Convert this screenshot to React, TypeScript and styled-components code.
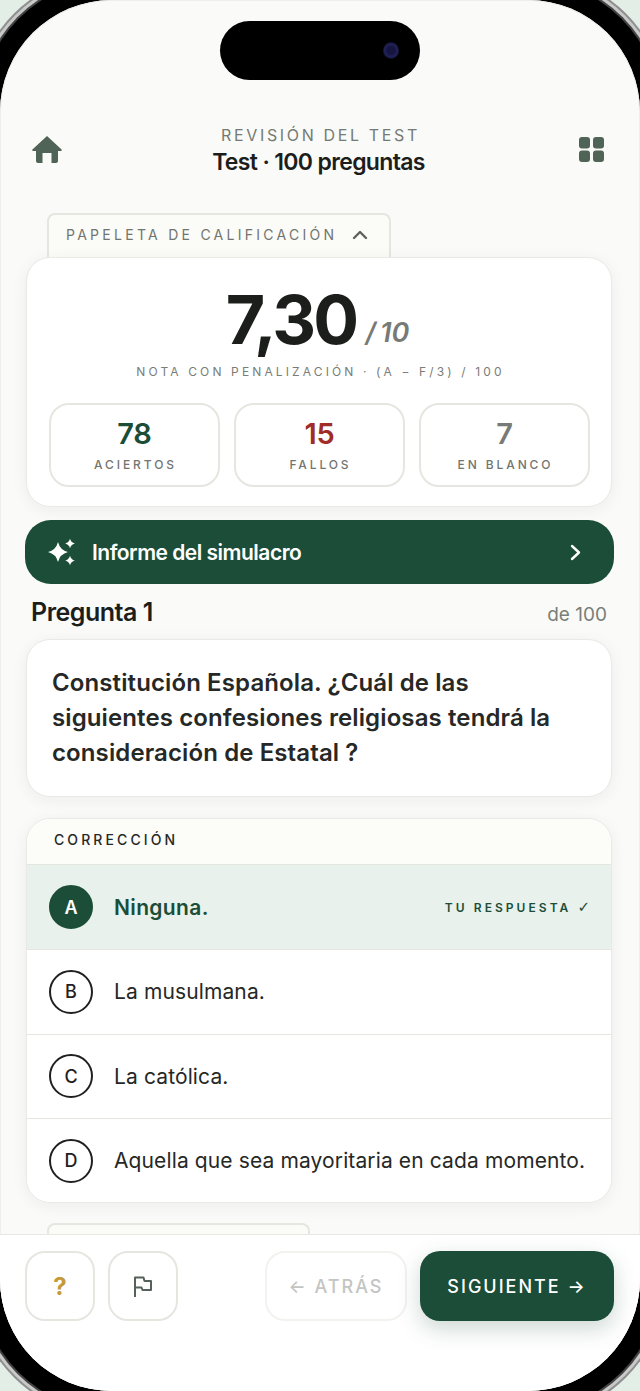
import React from "react";
import styled, { createGlobalStyle } from "styled-components";

const GREEN = "#1b4d38";
const LINE = "#e6e6e1";

const Global = createGlobalStyle`
  html, body {
    margin: 0;
    padding: 0;
    background: #e3efe6;
  }
  * { box-sizing: border-box; }
  body {
    font-family: Inter, "Liberation Sans", sans-serif;
    overflow: hidden;
  }
`;

const Screen = styled.div`
  position: relative;
  width: 640px;
  height: 1391px;
  display: flex;
  flex-direction: column;
  background: #fafaf8;
  border-radius: 112px;
  overflow: hidden;
  box-shadow: inset 0 0 0 1px #eeeeea, 0 0 0 20px #000, 0 0 0 22px #444, 0 0 0 25px #c9c9c9, 0 0 0 27px #8f8f8f;
`;

const Island = styled.div`
  position: absolute;
  top: 21px;
  left: 220px;
  width: 200px;
  height: 59px;
  border-radius: 30px;
  background: #000;
`;

const Camera = styled.div`
  position: absolute;
  top: 21px;
  right: 21px;
  width: 16px;
  height: 17px;
  border-radius: 50%;
  background: radial-gradient(circle, #15153f 30%, #22225a 55%, #000 85%);
`;

const Header = styled.header`
  display: flex;
  align-items: center;
  justify-content: space-between;
  padding: 125px 36px 0 32px;
`;

const HeaderIcon = styled.span`
  display: flex;
  margin-bottom: 5px;
`;

const HeaderTitle = styled.div`
  display: flex;
  flex-direction: column;
  align-items: center;
`;

const Eyebrow = styled.div`
  font-size: 16px;
  line-height: 20px;
  letter-spacing: 2.65px;
  color: #767a72;
`;

const Title = styled.h1`
  margin: 1px 4px 0 0;
  font-size: 23px;
  line-height: 32px;
  font-weight: 600;
  letter-spacing: -0.65px;
  color: #1c1e1b;
`;

const Content = styled.main`
  flex: 1;
  min-height: 0;
  overflow: hidden;
  padding: 35px 28px 0 26px;
`;

const Tab = styled.div<{ $width: number }>`
  display: flex;
  align-items: center;
  gap: 15px;
  width: ${(p) => p.$width}px;
  height: 44px;
  margin-left: 21px;
  padding: 0 0 3px 17px;
  background: #fbfbf8;
  border: 2px solid ${LINE};
  border-bottom: 0;
  border-radius: 8px 8px 0 0;
`;

const TabLabel = styled.span`
  font-size: 14px;
  letter-spacing: 3.27px;
  color: #72756f;
`;

const Card = styled.section`
  background: #fff;
  border: 1px solid #e9e9e5;
  border-radius: 24px;
  box-shadow: 0 3px 16px rgba(30, 40, 30, 0.06);
  overflow: hidden;
`;

const ScoreCard = styled(Card)`
  height: 250px;
  padding: 22px 22px 0;
`;

const ScoreLine = styled.div`
  display: flex;
  align-items: baseline;
  justify-content: center;
  gap: 9px;
  padding-right: 3px;
`;

const Score = styled.span`
  font-size: 68px;
  line-height: 78px;
  font-weight: 700;
  letter-spacing: -2.8px;
  color: #1c1e1b;
`;

const ScoreMax = styled.span`
  position: relative;
  top: -2px;
  font-size: 27px;
  font-style: italic;
  font-weight: 600;
  color: #777a75;
`;

const ScoreNote = styled.div`
  margin-top: 5px;
  padding-left: 3px;
  text-align: center;
  font-size: 12px;
  line-height: 18px;
  letter-spacing: 3.13px;
  color: #7a7d77;
`;

const Stats = styled.div`
  display: grid;
  grid-template-columns: repeat(3, 171px);
  gap: 14px;
  margin-top: 22px;
`;

const Stat = styled.div`
  height: 84px;
  display: flex;
  flex-direction: column;
  align-items: center;
  padding-top: 11px;
  border: 2px solid ${LINE};
  border-radius: 20px;
`;

const StatValue = styled.div<{ $color: string }>`
  font-size: 29px;
  line-height: 36px;
  font-weight: 600;
  letter-spacing: -0.2px;
  color: ${(p) => p.$color};
`;

const StatLabel = styled.div`
  margin-top: 5px;
  padding-left: 2px;
  font-size: 12px;
  line-height: 16px;
  font-weight: 500;
  letter-spacing: 2.9px;
  color: #72756f;
`;

const ReportButton = styled.div`
  display: flex;
  align-items: center;
  height: 64px;
  margin: 13px -2px 0 -1px;
  padding: 0 33px 0 23px;
  border-radius: 26px;
  background: ${GREEN};
  color: #fff;
`;

const ReportLabel = styled.span`
  flex: 1;
  margin-left: 17px;
  font-size: 21px;
  font-weight: 600;
  letter-spacing: -0.5px;
`;

const QuestionHead = styled.div`
  display: flex;
  align-items: baseline;
  justify-content: space-between;
  margin-top: 12px;
  padding: 0 5px;
`;

const QuestionNumber = styled.h2`
  margin: 0;
  font-size: 25px;
  line-height: 32px;
  font-weight: 600;
  letter-spacing: -0.5px;
  color: #1c1e1b;
`;

const QuestionTotal = styled.span`
  font-size: 19px;
  color: #7b7e78;
`;

const QuestionCard = styled(Card)`
  height: 158px;
  margin-top: 11px;
  padding: 25px 25px 0;
  font-size: 24px;
  line-height: 35px;
  font-weight: 600;
  letter-spacing: 0.11px;
  color: #262826;
`;

const AnswersCard = styled(Card)`
  height: 385px;
  margin-top: 21px;
`;

const AnswersHead = styled.div`
  height: 46px;
  padding: 12px 0 0 27px;
  background: #fcfcf8;
  border-bottom: 1px solid ${LINE};
  font-size: 14px;
  line-height: 18px;
  font-weight: 500;
  letter-spacing: 3.1px;
  color: #262826;
`;

const Option = styled.div<{ $selected?: boolean }>`
  display: flex;
  align-items: center;
  height: 84.33px;
  padding: 0 22px;
  background: ${(p) => (p.$selected ? "#e8f1ec" : "#fff")};
  & + & {
    border-top: 1px solid ${LINE};
  }
`;

const Letter = styled.div<{ $selected?: boolean }>`
  flex: none;
  display: flex;
  align-items: center;
  justify-content: center;
  width: 44px;
  height: 44px;
  border-radius: 50%;
  border: 2px solid ${(p) => (p.$selected ? GREEN : "#1f211f")};
  background: ${(p) => (p.$selected ? GREEN : "#fff")};
  color: ${(p) => (p.$selected ? "#fff" : "#1f211f")};
  font-size: 18px;
  font-weight: ${(p) => (p.$selected ? 600 : 500)};
`;

const OptionText = styled.div<{ $selected?: boolean }>`
  flex: 1;
  margin-left: 21px;
  font-size: 21px;
  letter-spacing: ${(p) => (p.$selected ? 0.35 : 0.12)}px;
  white-space: nowrap;
  font-weight: ${(p) => (p.$selected ? 600 : 400)};
  color: ${(p) => (p.$selected ? GREEN : "#262826")};
`;

const YourAnswer = styled.span`
  margin-right: -1px;
  font-size: 12px;
  font-weight: 600;
  letter-spacing: 3.05px;
  white-space: nowrap;
  color: ${GREEN};
`;

const Check = styled.span`
  font-family: "DejaVu Sans", sans-serif;
  font-size: 15px;
  font-weight: 400;
  letter-spacing: 0;
`;

const NextTab = styled(Tab)`
  height: 30px;
  margin-top: 20px;
`;

const Footer = styled.footer`
  flex: none;
  display: flex;
  align-items: flex-start;
  height: 157px;
  padding: 16px 26px 0 25px;
  background: #fff;
  border-top: 1px solid #e9e9e1;
`;

const IconButton = styled.div`
  display: flex;
  align-items: center;
  justify-content: center;
  width: 70px;
  height: 70px;
  margin-right: 13px;
  border: 2px solid ${LINE};
  border-radius: 20px;
  background: #fff;
  font-size: 24px;
  font-weight: 700;
  color: #c49a3a;
`;

const BackButton = styled.div`
  display: flex;
  align-items: center;
  justify-content: center;
  width: 142px;
  height: 70px;
  margin-left: auto;
  border: 2px solid #f2f2ef;
  border-radius: 20px;
  font-size: 18px;
  font-weight: 500;
  letter-spacing: 2px;
  color: #c3c5c2;
`;

const NextButton = styled.div`
  display: flex;
  align-items: center;
  justify-content: center;
  width: 194px;
  height: 70px;
  margin-left: 13px;
  border-radius: 20px;
  background: ${GREEN};
  box-shadow: 0 8px 22px rgba(27, 77, 56, 0.22);
  font-size: 18px;
  font-weight: 500;
  letter-spacing: 2px;
  color: #fff;
`;

const HomeIcon = () => (
  <svg width="30" height="27" viewBox="0 0 30 27" fill="#4f6356">
    <path d="M15 0 L29.6 13.4 Q30.4 15 28.6 15 H26 V25 Q26 27 24 27 H19.5 V17 H10.5 V27 H6 Q4 27 4 25 V15 H1.4 Q-0.4 15 0.4 13.4 Z" />
  </svg>
);

const GridIcon = () => (
  <svg width="25" height="25" viewBox="0 0 25 25" fill="#4f6356">
    <rect x="0" y="0" width="11" height="11.5" rx="3" />
    <rect x="14" y="0" width="11" height="11.5" rx="3" />
    <rect x="0" y="13.5" width="11" height="11.5" rx="3" />
    <rect x="14" y="13.5" width="11" height="11.5" rx="3" />
  </svg>
);

const ChevronUp = () => (
  <svg width="16" height="10" viewBox="0 0 16 10" fill="none" stroke="#5f625c" strokeWidth="2.4" strokeLinecap="round" strokeLinejoin="round">
    <path d="M2 8 L8 2 L14 8" />
  </svg>
);

const star = (x: number, y: number, r: number) => {
  const k = r * 0.2;
  return `M${x} ${y - r} Q${x + k} ${y - k} ${x + r} ${y} Q${x + k} ${y + k} ${x} ${y + r} Q${x - k} ${y + k} ${x - r} ${y} Q${x - k} ${y - k} ${x} ${y - r} Z`;
};

const Sparkles = () => (
  <svg width="27" height="27" viewBox="0 0 27 27" fill="#fff">
    <path d={star(10, 13, 10)} />
    <path d={star(22, 4.5, 4.8)} />
    <path d={star(22, 21.5, 4.8)} />
  </svg>
);

const ChevronRight = () => (
  <svg width="11" height="17" viewBox="0 0 11 17" fill="none" stroke="#fff" strokeWidth="2.4" strokeLinecap="round" strokeLinejoin="round">
    <path d="M2 2 L9 8.5 L2 15" />
  </svg>
);

const FlagIcon = () => (
  <svg width="20" height="21" viewBox="0 0 20 21" fill="none" stroke="#55625a" strokeWidth="2" strokeLinejoin="round">
    <path d="M2 21 V1.5 H10.5 L11.5 5 H18 V14 H9.5 L8.5 11.5 H2" />
  </svg>
);

const options = [
  { letter: "B", text: "La musulmana." },
  { letter: "C", text: "La católica." },
  { letter: "D", text: "Aquella que sea mayoritaria en cada momento." },
];

export default function App() {
  return (
    <>
      <Global />
      <Screen>
        <Island>
          <Camera />
        </Island>
        <Header>
          <HeaderIcon>
            <HomeIcon />
          </HeaderIcon>
          <HeaderTitle>
            <Eyebrow>REVISIÓN DEL TEST</Eyebrow>
            <Title>Test · 100 preguntas</Title>
          </HeaderTitle>
          <HeaderIcon>
            <GridIcon />
          </HeaderIcon>
        </Header>
        <Content>
          <Tab $width={344}>
            <TabLabel>PAPELETA DE CALIFICACIÓN</TabLabel>
            <ChevronUp />
          </Tab>
          <ScoreCard>
            <ScoreLine>
              <Score>7,30</Score>
              <ScoreMax>/{"\u2009"}10</ScoreMax>
            </ScoreLine>
            <ScoreNote>NOTA CON PENALIZACIÓN · (A − F/3) / 100</ScoreNote>
            <Stats>
              <Stat>
                <StatValue $color={GREEN}>78</StatValue>
                <StatLabel>ACIERTOS</StatLabel>
              </Stat>
              <Stat>
                <StatValue $color="#a02c27">15</StatValue>
                <StatLabel>FALLOS</StatLabel>
              </Stat>
              <Stat>
                <StatValue $color="#777a75">7</StatValue>
                <StatLabel>EN BLANCO</StatLabel>
              </Stat>
            </Stats>
          </ScoreCard>
          <ReportButton>
            <Sparkles />
            <ReportLabel>Informe del simulacro</ReportLabel>
            <ChevronRight />
          </ReportButton>
          <QuestionHead>
            <QuestionNumber>Pregunta 1</QuestionNumber>
            <QuestionTotal>de 100</QuestionTotal>
          </QuestionHead>
          <QuestionCard>
            Constitución Española. ¿Cuál de las siguientes confesiones religiosas tendrá la consideración de Estatal ?
          </QuestionCard>
          <AnswersCard>
            <AnswersHead>CORRECCIÓN</AnswersHead>
            <Option $selected>
              <Letter $selected>A</Letter>
              <OptionText $selected>Ninguna.</OptionText>
              <YourAnswer>
                TU RESPUESTA <Check>✓</Check>
              </YourAnswer>
            </Option>
            {options.map((o) => (
              <Option key={o.letter}>
                <Letter>{o.letter}</Letter>
                <OptionText>{o.text}</OptionText>
              </Option>
            ))}
          </AnswersCard>
          <NextTab $width={263} />
        </Content>
        <Footer>
          <IconButton>?</IconButton>
          <IconButton>
            <FlagIcon />
          </IconButton>
          <BackButton>← ATRÁS</BackButton>
          <NextButton>SIGUIENTE →</NextButton>
        </Footer>
      </Screen>
    </>
  );
}
